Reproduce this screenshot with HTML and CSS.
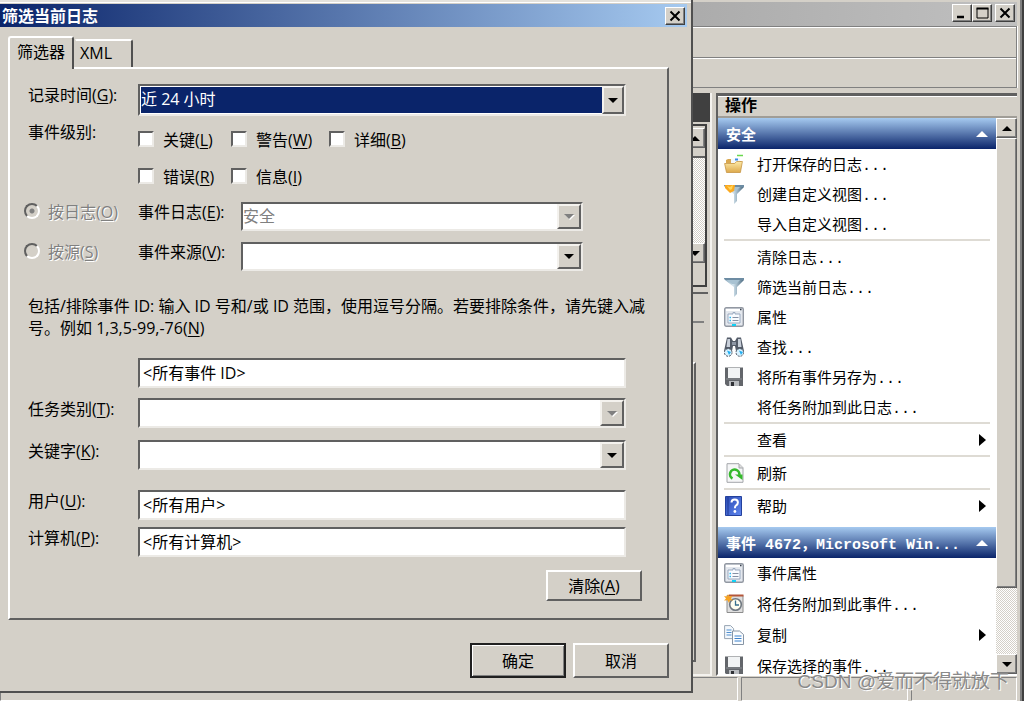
FILE: index.html
```html
<!DOCTYPE html>
<html lang="zh-CN">
<head>
  <meta charset="UTF-8">
  <meta name="viewport" content="width=device-width, initial-scale=1.0">
  <title>筛选当前日志</title>
  <link rel="stylesheet" href="styles.css">
</head>
<body>
  <!-- shared icons -->
  <svg class="defs" aria-hidden="true">
    <defs>
      <linearGradient id="steel" x1="0" y1="0" x2="1" y2="0">
        <stop offset="0" stop-color="#7f9fb4"/>
        <stop offset=".45" stop-color="#d3e4ee"/>
        <stop offset="1" stop-color="#48687f"/>
      </linearGradient>
      <linearGradient id="gold" x1="0" y1="0" x2="0" y2="1">
        <stop offset="0" stop-color="#fdeaa8"/>
        <stop offset="1" stop-color="#dda94c"/>
      </linearGradient>
      <linearGradient id="blue" x1="0" y1="0" x2="1" y2="1">
        <stop offset="0" stop-color="#2c4cb4"/>
        <stop offset="1" stop-color="#5f86ee"/>
      </linearGradient>
      <symbol id="funnel" viewBox="0 0 20 20">
        <path d="M0 1h20v2l-7 7v7l-3 3V10L1 3z" fill="url(#steel)"/>
        <path d="M0 1h20v2H1z" fill="#6d8ca3"/>
        <path d="M3 3h13l-4 4H8z" fill="#a8c2d2"/>
      </symbol>
      <symbol id="props" viewBox="0 0 20 20">
        <rect x=".7" y=".7" width="18.6" height="18.6" rx="1.5" fill="#e4e8ee" stroke="#9298a2" stroke-width="1.4"/>
        <path d="M2 3h14" stroke="#fff" stroke-width="2"/>
        <path d="M16 2.500h1.500" stroke="#39414d" stroke-width="1.5"/>
        <path d="M4 7h5V5.500h2V7h5v9H4z" fill="#f8fbff" stroke="#9aa9bf"/>
        <path d="M5.500 10.500H7M5.500 13.500H7" stroke="#2bb8ee" stroke-width="1.6"/>
        <path d="M8.500 10.500h6M8.500 13.500h6" stroke="#8590a4" stroke-width="1.2"/>
        <path d="M8 18h4" stroke="#10d0f5" stroke-width="2"/>
      </symbol>
      <symbol id="floppy" viewBox="0 0 20 20">
        <path d="M1 .5h18V19H3l-2-2z" fill="#63666b"/>
        <path d="M4 1h12v10H4z" fill="#f1f3f4"/>
        <path d="M2 12h16" stroke="#8b8e93"/>
        <path d="M5 14h10v5H5z" fill="#b9bcc0"/>
        <path d="M7 15h3v4H7z" fill="#303236"/>
      </symbol>
    </defs>
  </svg>

  <div class="window">
    <header class="window-title">
      <button class="sys" aria-label="最小化"><svg viewBox="0 0 14 14"><path d="M2 11h7" stroke="#000" stroke-width="2.500"/></svg></button>
      <button class="sys" aria-label="最大化"><svg viewBox="0 0 14 14"><path d="M2 2.500h11v9.500H2z" fill="none" stroke="#000"/><path d="M1.500 2.500h12" stroke="#000" stroke-width="2"/></svg></button>
      <button class="sys sys-close" aria-label="关闭"><svg viewBox="0 0 14 14"><path d="M2.500 2.500l9 9m0-9l-9 9" stroke="#000" stroke-width="2"/></svg></button>
    </header>
    <div class="bar"></div>
    <div class="bar"></div>

    <div class="window-body">
      <div class="center">
        <div class="center-head"></div>
        <div class="log-list">
          <div class="scrollbar">
            <span class="scroll-btn"><i class="tri up"></i></span>
            <span class="log-thumb"></span>
            <span class="track"></span>
            <span class="scroll-btn"><i class="tri down"></i></span>
          </div>
        </div>
        <div class="detail">
          <div class="detail-line"></div>
          <div class="detail-box"></div>
        </div>
      </div>

      <aside class="actions">
        <h2>操作</h2>
        <div class="actions-body">
          <div class="actions-list">
            <h3>安全<i class="tri up"></i></h3>
            <ul>
              <li><svg viewBox="0 0 20 20"><path d="M13 1.500h6" stroke="#69d84e" stroke-width="1.500"/><path d="M2 9V6l2-1h4l1 2h8v3z" fill="#d9a850"/><path d="M7 5l9-1v5H7z" fill="#f2f7fd"/><path d="M11 5.500h3" stroke="#3b8be6" stroke-width="2"/><path d="M.6 9.500h10l2-2h5.800l-2 11H2.500z" fill="url(#gold)" stroke="#c79644" stroke-width=".8"/></svg><a href="#">打开保存的日志...</a></li>
              <li><svg viewBox="0 0 20 20"><use href="#funnel"/><path d="M1 1h10l-1 6-4 2-5-5z" fill="#fba91f"/><path d="M3 2l3 1 3-2-1 4-2 1z" fill="#ffd65b"/></svg><a href="#">创建自定义视图...</a></li>
              <li><a href="#">导入自定义视图...</a></li>
            </ul>
            <ul>
              <li><a href="#">清除日志...</a></li>
              <li><svg><use href="#funnel"/></svg><a href="#">筛选当前日志...</a></li>
              <li><svg><use href="#props"/></svg><a href="#">属性</a></li>
              <li><svg viewBox="0 0 20 20"><path d="M3 .5h4l2 3.500h2l2-3.500h4L20 14h-8l-1-5H9l-1 5H0z" fill="#535b68"/><path d="M3.500 2h2.500v8H2.500zm10.500 0h2.500l1 8H14z" fill="#c9d0da"/><path d="M8 5h4v3H8z" fill="#8d96a4"/><circle cx="4.200" cy="15.500" r="3.800" fill="#d8f2ff" stroke="#4d5663" stroke-dasharray="2 1"/><circle cx="15.800" cy="15.500" r="3.800" fill="#d8f2ff" stroke="#4d5663" stroke-dasharray="2 1"/><path d="M3 13.500l4 1.500-2 3zm12 0l4 1.500-2 3z" fill="#22aef0"/></svg><a href="#">查找...</a></li>
              <li><svg><use href="#floppy"/></svg><a href="#">将所有事件另存为...</a></li>
              <li><a href="#">将任务附加到此日志...</a></li>
            </ul>
            <ul>
              <li><a href="#">查看</a><i class="tri right"></i></li>
            </ul>
            <ul>
              <li><svg viewBox="0 0 20 20"><path d="M3 .7h12l4 4v14.600H3z" fill="#f5f6f7" stroke="#a3a6aa"/><path d="M15 1v4h4" fill="#ddd" stroke="#a3a6aa"/><path d="M8.500 15.500A4.700 4.700 0 1 1 15.300 12" fill="none" stroke="#35b82c" stroke-width="2.600"/><path d="M11 11.500h7.500V17z" fill="#35b82c"/></svg><a href="#">刷新</a></li>
            </ul>
            <ul>
              <li><svg viewBox="0 0 20 20"><path d="M1.500.5h16v19h-16z" fill="url(#blue)" stroke="#24419d"/><path d="M4 1v18" stroke="#203c98"/><path d="M7.500 6.500q0-3 3.200-3t3.200 3q0 1.700-1.700 2.800-1.300.9-1.300 3" fill="none" stroke="#fff" stroke-width="2"/><circle cx="10.900" cy="15.500" r="1.400" fill="#fff"/></svg><a href="#">帮助</a><i class="tri right"></i></li>
            </ul>

            <h3>事件 4672，Microsoft Win...<i class="tri up"></i></h3>
            <ul class="event-actions">
              <li><svg><use href="#props"/></svg><a href="#">事件属性</a></li>
              <li><svg viewBox="0 0 20 20"><path d="M3 1.500h16v17H3z" fill="#dedede" stroke="#8d8d8d"/><path d="M5 1.500h14.500" stroke="#b4573a" stroke-width="2"/><circle cx="11.500" cy="10.500" r="5.800" fill="#fffef0" stroke="#6f7780" stroke-width="1.600"/><path d="M11.500 6.500v4.500h3.500" fill="none" stroke="#376f8d" stroke-width="1.300"/><path d="M4 0l1.300 2.600L8.500 2 7 4.500l2 2-3-.2L5 9 3.600 6.300 0 6.500l2-2L0 2l3 .5z" fill="#f8a321"/></svg><a href="#">将任务附加到此事件...</a></li>
              <li><svg viewBox="0 0 20 20"><path d="M.6.600h6l3 3v10h-9z" fill="#f4f8fc" stroke="#98a5b3"/><path d="M2.500 5h5M2.500 7.500h5M2.500 10h5" stroke="#4f8fd0"/><path d="M8.500 6h7l4 3.500v10h-11z" fill="#fbfdff" stroke="#8795a5"/><path d="M10.500 11h7M10.500 13.500h7M10.500 16h7" stroke="#3d82cc"/></svg><a href="#">复制</a><i class="tri right"></i></li>
              <li><svg><use href="#floppy"/></svg><a href="#">保存选择的事件...</a></li>
            </ul>
          </div>
          <div class="scrollbar">
            <span class="scroll-btn"><i class="tri up"></i></span>
            <span class="thumb"></span>
            <span class="track"></span>
            <span class="scroll-btn"><i class="tri down"></i></span>
          </div>
        </div>
      </aside>
    </div>

    <footer class="status">
      <span class="status-main"></span>
      <span class="status-mid"></span>
      <span class="status-end"></span>
    </footer>
  </div>

  <form class="dialog" role="dialog" aria-labelledby="dialogTitle">
    <div class="dialog-title">
      <h1 id="dialogTitle">筛选当前日志</h1>
      <button type="button" class="sys" aria-label="关闭"><svg viewBox="0 0 14 14"><path d="M2.500 2.500l9 9m0-9l-9 9" stroke="#000" stroke-width="2"/></svg></button>
    </div>

    <div class="tabs" role="tablist">
      <button type="button" class="tab active" role="tab" aria-selected="true">筛选器</button>
      <button type="button" class="tab" role="tab" aria-selected="false">XML</button>
    </div>

    <div class="panel">
      <div class="row row-first">
        <label for="logged">记录时间(<u>G</u>):</label>
        <div class="combo combo-tall">
          <select id="logged" class="selected"><option>近 24 小时</option></select>
          <span class="arrow"><i class="tri down"></i></span>
        </div>
      </div>

      <div class="row row-levels">
        <span class="label" id="levels">事件级别:</span>
        <div class="levels" role="group" aria-labelledby="levels">
          <label><input type="checkbox"><span>关键(<u>L</u>)</span></label>
          <label><input type="checkbox"><span>警告(<u>W</u>)</span></label>
          <label><input type="checkbox"><span>详细(<u>B</u>)</span></label>
          <label><input type="checkbox"><span>错误(<u>R</u>)</span></label>
          <label><input type="checkbox"><span>信息(<u>I</u>)</span></label>
        </div>
      </div>

      <div class="source">
        <label class="radio"><input type="radio" name="by" checked disabled><span>按日志(<u>O</u>)</span></label>
        <label class="source-label" for="log">事件日志(<u>E</u>):</label>
        <div class="combo">
          <select id="log" disabled><option>安全</option></select>
          <span class="arrow off"><i class="tri down"></i></span>
        </div>
      </div>
      <div class="source">
        <label class="radio"><input type="radio" name="by" disabled><span>按源(<u>S</u>)</span></label>
        <label class="source-label" for="provider">事件来源(<u>V</u>):</label>
        <div class="combo">
          <select id="provider"><option></option></select>
          <span class="arrow"><i class="tri down"></i></span>
        </div>
      </div>

      <label class="hint" for="ids">包括/排除事件 ID: 输入 ID 号和/或 ID 范围，使用逗号分隔。若要排除条件，请先键入减号。例如 1,3,5-99,-76(<u>N</u>)</label>

      <div class="row row-ids">
        <input type="text" id="ids" value="&lt;所有事件 ID&gt;">
      </div>
      <div class="row row-task">
        <label for="task">任务类别(<u>T</u>):</label>
        <div class="combo">
          <select id="task" disabled><option></option></select>
          <span class="arrow off"><i class="tri down"></i></span>
        </div>
      </div>
      <div class="row row-keyword">
        <label for="keyword">关键字(<u>K</u>):</label>
        <div class="combo">
          <select id="keyword"><option></option></select>
          <span class="arrow"><i class="tri down"></i></span>
        </div>
      </div>
      <div class="row row-user">
        <label for="user">用户(<u>U</u>):</label>
        <input type="text" id="user" value="&lt;所有用户&gt;">
      </div>
      <div class="row row-computer">
        <label for="computer">计算机(<u>P</u>):</label>
        <input type="text" id="computer" value="&lt;所有计算机&gt;">
      </div>
      <div class="clear">
        <button type="reset" class="btn">清除(<u>A</u>)</button>
      </div>
    </div>

    <div class="buttons">
      <button type="button" class="btn default">确定</button>
      <button type="button" class="btn">取消</button>
    </div>
  </form>

  <div class="watermark">CSDN @爱而不得就放下</div>
</body>
</html>
```
FILE: styles.css
```css
* {
  box-sizing: border-box;
  margin: 0;
  padding: 0;
}
body {
  position: relative;
  height: 100vh;
  overflow: hidden;
  background: #d4d0c8;
  color: #000;
  font-family: "Open Sans", "Noto Sans CJK SC", sans-serif;
  font-size: 16px;
}
button, input, select {
  font: inherit;
  color: inherit;
}
u {
  text-underline-offset: 2px;
}
.defs {
  position: absolute;
  width: 0;
  height: 0;
}

/* triangles */
.tri {
  display: block;
  width: 0;
  height: 0;
  border: 5px solid transparent;
}
.tri.up {
  border-top: 0;
  border-bottom-color: #000;
}
.tri.down {
  border-bottom: 0;
  border-top-color: #000;
}
.tri.right {
  border-width: 6px 0 6px 7px;
  border-left-color: #000;
}

/* main window */
.window {
  display: flex;
  flex-direction: column;
  height: 100vh;
  padding: 2px 5px 0 0;
  border-right: 2px solid #404040;
  box-shadow: inset -2px 0 #808080;
}
.window-title {
  display: flex;
  justify-content: flex-end;
  height: 24px;
  padding: 2px 2px 0 0;
  background: linear-gradient(90deg, #808080, #c0c0c0);
}
.sys {
  width: 20px;
  height: 18px;
  background: #d4d0c8;
  border: 1px solid;
  border-color: #fff #404040 #404040 #fff;
  box-shadow: inset -1px -1px #808080;
}
.sys svg {
  display: block;
  width: 14px;
  height: 14px;
  margin: 0 auto;
}
.sys-close {
  margin-left: 3px;
}
.bar {
  height: 31px;
  border: 1px solid #808080;
  border-bottom: 0;
  box-shadow: inset 0 1px #fff, 1px 0 #fff;
}
.bar + .bar {
  border-bottom: 1px solid #808080;
}
.window-body {
  display: flex;
  flex: 1;
  min-height: 0;
  padding-top: 5px;
}
.center {
  display: flex;
  flex: 1;
  flex-direction: column;
  margin-right: 4px;
  border-right: 2px solid #f4f2ee;
  border-bottom: 2px solid #f4f2ee;
}
.center-head {
  height: 29px;
  background: #404040;
}
.log-list {
  display: flex;
  justify-content: flex-end;
  height: 163px;
  margin: 2px 3px 0 0;
  padding: 2px 0 22px;
  border: 2px solid #404040;
}
.log-thumb {
  height: 10px;
  border-bottom: 2px solid #606060;
}
.detail {
  flex: 1;
  margin: 5px 2px 0 0;
  padding-right: 4px;
  border-top: 2px solid #606060;
}
.detail-line {
  height: 29px;
  border-bottom: 2px solid #808080;
}
.detail-box {
  height: 300px;
  margin: 39px 8px 0 0;
  border: 2px solid #606060;
  border-top-color: #fff;
}

/* actions pane */
.actions {
  display: flex;
  flex-direction: column;
  width: 301px;
  min-height: 0;
  border-top: 3px solid #606060;
  border-left: 2px solid #606060;
  border-bottom: 2px solid #fff;
  font-family: "Liberation Mono", "Noto Sans CJK SC", monospace;
  font-size: 15px;
}
.actions h2 {
  height: 22px;
  padding-left: 7px;
  border-top: 1px solid #fff;
  border-bottom: 2px solid #a09d97;
  font-size: 16px;
  line-height: 20px;
}
.actions-body {
  display: flex;
  flex: 1;
  min-height: 0;
}
.actions-list {
  flex: 1;
  overflow: hidden;
  background: #fff;
}
.actions h3 {
  display: flex;
  align-items: center;
  justify-content: space-between;
  height: 31px;
  padding: 0 8px;
  background: linear-gradient(#a6caf0, #0a246a);
  color: #fff;
  font-size: 15px;
  white-space: nowrap;
}
.actions h3 .tri {
  border-width: 0 6px 6px;
  border-bottom-color: #fff;
}
.actions ul {
  list-style: none;
  padding: 0 6px;
}
.actions ul + ul::before {
  content: "";
  display: block;
  height: 1px;
  border-top: 2px solid #dedbd4;
}
.actions ul + h3 {
  margin-top: 6px;
}
.actions li {
  display: flex;
  align-items: center;
  height: 30px;
  padding-right: 4px;
}
.actions li svg {
  width: 20px;
  height: 20px;
  margin-right: 13px;
}
.actions li a {
  flex: 1;
  color: #000;
  text-decoration: none;
  white-space: nowrap;
}
.actions li a:first-child {
  margin-left: 33px;
}
.event-actions li + li {
  margin-top: 1px;
}

/* scrollbars */
.scrollbar {
  display: flex;
  flex-direction: column;
  width: 21px;
  background: #d4d0c8;
}
.scroll-btn {
  display: flex;
  align-items: center;
  justify-content: center;
  height: 20px;
  border: 1px solid;
  border-color: #fff #606060 #606060 #fff;
  box-shadow: inset -1px -1px #808080;
}
.thumb {
  height: 81%;
  border: 1px solid;
  border-color: #fff #606060 #606060 #fff;
  box-shadow: inset -1px -1px #808080;
}
.track {
  flex: 1;
  background: repeating-conic-gradient(#fff 0 25%, #d4d0c8 0 50%) 0 0 / 2px 2px;
}

/* status bar */
.status {
  display: flex;
  gap: 3px;
  height: 25px;
  padding-top: 1px;
}
.status span {
  border: 1px solid;
  border-color: #808080 #fff #fff #808080;
}
.status-main {
  flex: 1;
}
.status-mid {
  width: 167px;
}
.status-end {
  width: 106px;
}

/* filter dialog, floats over the window */
.dialog {
  position: absolute;
  top: 0;
  left: 0;
  right: 331px;
  padding: 4px 4px 13px 0;
  background: #d4d0c8;
  border-right: 2px solid #505050;
  border-bottom: 2px solid #505050;
  box-shadow: inset 0 2px #e4e2dd, inset 0 3px #fff;
}
.dialog-title {
  display: flex;
  align-items: center;
  justify-content: space-between;
  height: 23px;
  padding: 0 2px;
  background: linear-gradient(90deg, #0a246a, #a6caf0);
  color: #fff;
}
.dialog-title h1 {
  font-size: 16px;
  line-height: 22px;
}
.tabs {
  display: flex;
  align-items: flex-end;
  margin: 9px 0 0 8px;
}
.tab {
  width: 59px;
  height: 28px;
  padding: 0 0 2px 4px;
  background: #d4d0c8;
  border: 2px solid;
  border-color: #fff #505050 #d4d0c8 #d4d0c8;
  border-bottom: 0;
  border-radius: 3px 3px 0 0;
  text-align: left;
}
.tab.active {
  z-index: 1;
  width: 66px;
  height: 33px;
  margin-bottom: -2px;
  padding: 0 0 6px 7px;
  border-left-color: #fff;
}
.panel {
  margin: 0 18px 0 8px;
  padding-bottom: 17px;
  border: 2px solid;
  border-color: #fff #606060 #606060 #fff;
}
.row {
  display: flex;
  margin-right: 41px;
  padding-left: 18px;
}
.row > label, .row > .label {
  width: 110px;
  line-height: 22px;
}
.row-first {
  margin-top: 15px;
}
.row-levels {
  margin-top: 5px;
}
.row-ids {
  margin-top: 19px;
  padding-left: 128px;
}
.row-task {
  margin-top: 10px;
}
.row-keyword {
  margin-top: 12px;
}
.row-user {
  margin-top: 20px;
}
.row-computer {
  margin-top: 7px;
}

input[type="text"] {
  flex: 1;
  min-width: 0;
  height: 30px;
  padding: 0 3px 2px;
  background: #fff;
  border: 2px solid;
  border-color: #606060 #eceae6 #eceae6 #606060;
  outline: 0;
}
.combo {
  position: relative;
  flex: 1;
  height: 30px;
  border: 2px solid;
  border-color: #606060 #eceae6 #eceae6 #606060;
}
.combo-tall {
  height: 32px;
}
.combo select {
  display: block;
  width: 100%;
  height: 100%;
  padding: 0 24px 2px 0;
  appearance: none;
  background: #fff;
  border: 0;
  border-radius: 0;
  opacity: 1;
}
.combo select:disabled {
  color: #808080;
}
.combo select.selected {
  background: #0a246a;
  border: 1px solid #fff;
  color: #fff;
}
.combo .arrow {
  position: absolute;
  top: 0;
  right: 0;
  bottom: 0;
  display: flex;
  align-items: center;
  justify-content: center;
  width: 24px;
  background: #d4d0c8;
  border: 2px solid;
  border-color: #f4f2ee #606060 #606060 #f4f2ee;
  pointer-events: none;
}
.combo-tall .arrow {
  width: 22px;
}
.off .tri.down {
  border-top-color: #808080;
  filter: drop-shadow(1px 1px #fff);
}

.levels {
  display: grid;
  grid-template-columns: 93px 98px auto;
  grid-auto-rows: 37px;
}
.levels label {
  display: flex;
  align-items: center;
  gap: 9px;
  padding-bottom: 2px;
}
.levels input {
  width: 16px;
  height: 16px;
  appearance: none;
  background: #fff;
  border: 2px solid;
  border-color: #606060 #eceae6 #eceae6 #606060;
}

.source {
  display: flex;
  margin: 7px 84px 0 14px;
}
.source + .source {
  margin-top: 11px;
}
.source label {
  line-height: 20px;
}
.radio {
  display: flex;
  width: 114px;
  color: #808080;
  text-shadow: 1px 1px #fff;
}
.radio input {
  width: 16px;
  height: 16px;
  margin: 1px 8px 0 0;
  appearance: none;
  border: 2px solid;
  border-color: #606060 #fff #fff #606060;
  border-radius: 50%;
}
.radio input:checked {
  background: radial-gradient(circle, #808080 2px, transparent 3px);
}
.source-label {
  width: 103px;
}
.source .combo {
  height: 29px;
}
.hint {
  display: block;
  margin: 24px 16px 0 18px;
  line-height: 22px;
}
.clear {
  display: flex;
  justify-content: flex-end;
  margin: 13px 25px 0 0;
}
.btn {
  width: 96px;
  height: 31px;
  padding-bottom: 2px;
  background: #d4d0c8;
  border: 2px solid;
  border-color: #fff #606060 #606060 #fff;
}
.buttons {
  display: flex;
  justify-content: flex-end;
  gap: 7px;
  margin: 23px 18px 0 0;
}
.buttons .btn {
  height: 35px;
}
.btn.default {
  border-color: #202020;
  box-shadow: inset 1px 1px #fff, inset -1px -1px #808080;
}

.watermark {
  position: absolute;
  right: 15px;
  bottom: 6px;
  color: #8a8a8a;
  font-family: "Liberation Sans", "Noto Sans CJK SC", sans-serif;
  font-size: 19px;
  line-height: 26px;
  text-shadow: 1px 1px #fff;
  pointer-events: none;
}
```
